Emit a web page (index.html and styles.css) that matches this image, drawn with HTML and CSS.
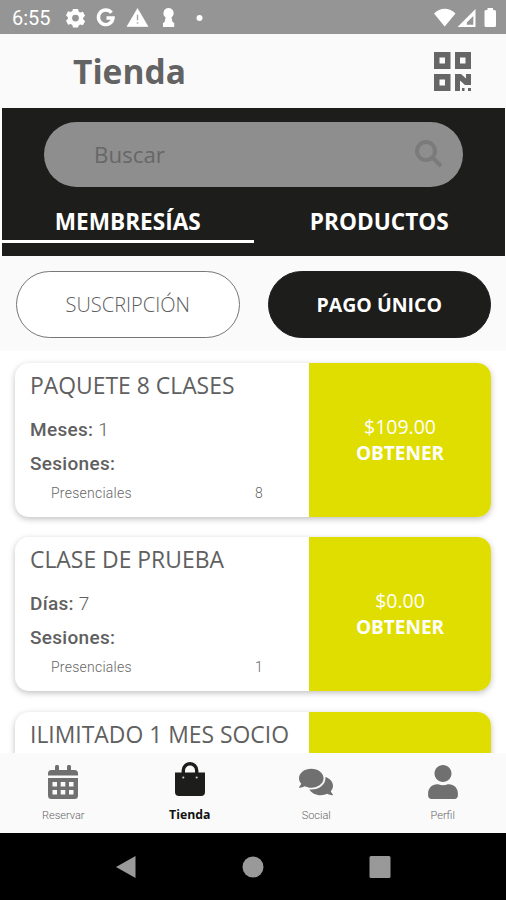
FILE: index.html
```html
<!DOCTYPE html>
<html lang="es">
<head>
  <meta charset="UTF-8" />
  <meta name="viewport" content="width=device-width, initial-scale=1.0" />
  <title>Tienda</title>
  <link rel="stylesheet" href="styles.css">
</head>
<body>
  <div class="status-bar">
    <span class="clock">6:55</span>
    <svg class="status-left" viewBox="0 0 140 20">
      <path fill-rule="evenodd" d="M7 1h5l.7 2.6 1.6.9 2.6-.8 2.2 4-2 2v1.6l2 2-2.2 4-2.6-.8-1.6.9L12 19.500H7l-.7-2.600-1.600-.9-2.600.8-2.100-4 1.900-2V9.200L0 7.200l2.100-4 2.600.8 1.600-.9zM9.500 6.700a3.400 3.400 0 1 0 0 6.800 3.400 3.400 0 0 0 0-6.800z"/>
      <path class="g-mark" d="M45.500 4.800A7.300 7.300 0 1 0 47 10h-6.500"/>
      <path fill-rule="evenodd" d="M71.500 0.500 82 18.500H61zM70.700 6.500v6h1.700v-6zm0 7.500v2h1.700v-2z" stroke="#fff" stroke-width=".6"/>
      <path d="M102.500 0a5.200 5.200 0 0 1 3 9.400l1 4.600 1.700 1v4H97v-4l1.600-1 1-4.600A5.200 5.200 0 0 1 102.500 0z"/>
      <circle cx="133.500" cy="10" r="3"/>
    </svg>
    <svg class="status-right" viewBox="0 0 63 20">
      <path d="M0 5.500C6-1 15.500-1 21.500 5.500L10.700 18.500z"/>
      <path fill-rule="evenodd" d="M41.500 1v18h-18zM39.300 8v8.800h-6.500v-2.300z"/>
      <rect x="50.500" y="2" width="11.500" height="17" rx="1.500"/>
      <rect x="53.500" y="0" width="5.500" height="4"/>
    </svg>
  </div>

  <header class="header">
    <h1 class="title">Tienda</h1>
    <svg class="qr" viewBox="0 0 37 39">
      <path fill-rule="evenodd" d="M0 0h16.500v17H0zM5.500 5.500v6h5.500v-6zM21 0h16v17H21zM26 5.500v6h5.500v-6zM0 22h16.500v17H0zM5.500 27.500v6h5.500v-6z"/>
      <path d="M21 22h6l5 4.500V22h5v11h-6l-5-4.500V39h-5zM28 36h2.500v3H28zM34 36h3v3h-3z"/>
    </svg>
  </header>

  <!-- search + tabs -->
  <section class="top-panel">
    <div class="search">
      <span>Buscar</span>
      <svg class="search-icon" viewBox="0 0 28 28">
        <circle cx="11" cy="11" r="9"/>
        <path d="M17.500 17.500 26 26"/>
      </svg>
    </div>
    <div class="tabs">
      <div class="tab active">MEMBRESÍAS</div>
      <div class="tab">PRODUCTOS</div>
    </div>
  </section>

  <div class="filters">
    <button class="pill">SUSCRIPCIÓN</button>
    <button class="pill selected">PAGO ÚNICO</button>
  </div>

  <main class="list">
    <article class="card">
      <div class="card-info">
        <h2>PAQUETE 8 CLASES</h2>
        <p class="detail"><b>Meses:</b> 1</p>
        <p class="detail"><b>Sesiones:</b></p>
        <p class="session"><span>Presenciales</span><span>8</span></p>
      </div>
      <div class="card-buy">
        <span>$109.00</span>
        <strong>OBTENER</strong>
      </div>
    </article>

    <article class="card">
      <div class="card-info">
        <h2>CLASE DE PRUEBA</h2>
        <p class="detail"><b>Días:</b> 7</p>
        <p class="detail"><b>Sesiones:</b></p>
        <p class="session"><span>Presenciales</span><span>1</span></p>
      </div>
      <div class="card-buy">
        <span>$0.00</span>
        <strong>OBTENER</strong>
      </div>
    </article>

    <article class="card">
      <div class="card-info">
        <h2>ILIMITADO 1 MES SOCIO</h2>
      </div>
      <div class="card-buy"></div>
    </article>
  </main>

  <nav class="bottom-nav">
    <div class="nav-item">
      <svg class="nav-icon" viewBox="0 0 30 34">
        <path d="M7 6V1.800a1.500 1.500 0 0 1 4 0V5h8V1.800a1.500 1.500 0 0 1 4 0V5h3.500A3.500 3.500 0 0 1 30 8.500v2H0v-2A3.500 3.500 0 0 1 3.500 5H7z"/>
        <path fill-rule="evenodd" d="M0 13h30v17.500a3.500 3.500 0 0 1-3.500 3.500h-23A3.500 3.500 0 0 1 0 30.500zM4.500 17v4.500H9V17zm8.200 0v4.500h4.600V17zm8.300 0v4.500h4.500V17zM4.500 25v4.500H9V25zm8.200 0v4.500h4.600V25zm8.300 0v4.500h4.500V25z"/>
      </svg>
      <span>Reservar</span>
    </div>
    <div class="nav-item current">
      <svg class="nav-icon" viewBox="0 0 30 34">
        <path d="M0 10.500h30V30a4 4 0 0 1-4 4H4a4 4 0 0 1-4-4z"/>
        <path class="handle" d="M8.300 14V8.500a6.700 6.700 0 0 1 13.400 0V14"/>
        <circle class="stud" cx="8.300" cy="15.500" r="1.100"/>
        <circle class="stud" cx="21.700" cy="15.500" r="1.100"/>
      </svg>
      <span>Tienda</span>
    </div>
    <div class="nav-item">
      <svg class="nav-icon chat" viewBox="0 32 576 448">
        <path d="M416 192c0-88.400-93.100-160-208-160S0 103.600 0 192c0 34.300 14.100 65.900 38 92-13.400 30.200-35.500 54.200-35.800 54.500-2.200 2.300-2.800 5.700-1.500 8.700S4.800 352 8 352c36.600 0 66.900-12.300 88.700-25 32.200 15.700 70.300 25 111.300 25 114.900 0 208-71.600 208-160zm122 220c23.900-26 38-57.700 38-92 0-66.900-53.500-124.200-129.300-148.100.9 6.600 1.300 13.300 1.300 20.100 0 105.900-107.700 192-240 192-10.800 0-21.300-.8-31.700-1.900C207.800 439.600 281.800 480 368 480c41 0 79.100-9.200 111.300-25 21.800 12.700 52.100 25 88.700 25 3.200 0 6.100-1.900 7.300-4.800 1.300-2.900.7-6.300-1.500-8.700-.3-.3-22.400-24.200-35.800-54.500z"/>
      </svg>
      <span>Social</span>
    </div>
    <div class="nav-item">
      <svg class="nav-icon" viewBox="0 0 448 512">
        <path d="M224 256c70.700 0 128-57.300 128-128S294.700 0 224 0 96 57.300 96 128s57.300 128 128 128zm89.600 32h-16.700c-22.200 10.200-46.900 16-72.900 16s-50.600-5.800-72.900-16h-16.700C60.200 288 0 348.200 0 422.400V464c0 26.500 21.500 48 48 48h352c26.500 0 48-21.500 48-48v-41.600c0-74.200-60.200-134.400-134.400-134.400z"/>
      </svg>
      <span>Perfil</span>
    </div>
  </nav>

  <div class="system-nav">
    <svg viewBox="0 0 22 24"><path d="M1 12 20.500 1v22z"/></svg>
    <svg viewBox="0 0 22 24"><circle cx="11" cy="12" r="10.500"/></svg>
    <svg viewBox="0 0 22 24"><rect x=".5" y="1" width="21" height="22" rx="1.500"/></svg>
  </div>
</body>
</html>
```
FILE: styles.css
```css
* {
  box-sizing: border-box;
}
body {
  margin: 0;
  width: 506px;
  height: 900px;
  display: flex;
  flex-direction: column;
  overflow: hidden;
  background-color: #fff;
  color: #606060;
  font-family: "Open Sans", "Noto Sans", sans-serif;
}
h1, h2, p {
  margin: 0;
}
svg {
  display: block;
  flex: none;
}

.status-bar {
  flex: none;
  height: 34px;
  display: flex;
  align-items: center;
  padding: 1px 9px 0 12px;
  background-color: #959595;
  color: #fff;
  fill: #fff;
}
.clock {
  width: 54px;
  font-family: Roboto, sans-serif;
  font-size: 20px;
}
.status-left {
  width: 140px;
  height: 20px;
}
.g-mark {
  fill: none;
  stroke: #fff;
  stroke-width: 3.4;
}
.status-right {
  width: 63px;
  height: 20px;
  margin-left: auto;
}

.header {
  flex: none;
  height: 74px;
  display: flex;
  align-items: center;
  justify-content: space-between;
  padding: 0 35px 0 73px;
  background-color: #fafafa;
}
.title {
  font-size: 33.5px;
  line-height: 46px;
  font-weight: 700;
  color: #636363;
}
.qr {
  width: 37px;
  height: 39px;
  fill: #666;
}

.top-panel {
  flex: none;
  height: 148px;
  margin: 0 1px 0 2px;
  padding-top: 14px;
  background-color: #1d1d1b;
}
.search {
  height: 65px;
  margin: 0 42px;
  padding: 0 20px 0 50px;
  display: flex;
  align-items: center;
  justify-content: space-between;
  border-radius: 33px;
  background-color: #8e8e8e;
  color: #676767;
  font-size: 22.3px;
}
.search-icon {
  width: 28px;
  height: 28px;
  margin-bottom: 2px;
  fill: none;
  stroke: #7b7b7b;
  stroke-width: 4;
}
.tabs {
  display: flex;
  margin-top: 13px;
}
.tab {
  flex: 1;
  height: 43px;
  line-height: 43px;
  text-align: center;
  color: #fff;
  font-size: 22.6px;
  font-weight: 700;
}
.tab.active {
  border-bottom: 3px solid #fff;
}

.filters {
  flex: none;
  height: 95px;
  display: flex;
  gap: 28px;
  padding: 15px 15px 13px 16px;
  background-color: #fafafa;
}
.pill {
  flex: 1;
  height: 67px;
  padding: 0;
  border: 1px solid #777;
  border-radius: 34px;
  background-color: #fff;
  color: #606060;
  font-family: inherit;
  font-size: 20px;
  font-weight: 300;
}
.pill.selected {
  border-color: #1d1d1b;
  background-color: #1d1d1b;
  color: #fff;
  font-size: 19.5px;
  font-weight: 700;
}

.list {
  flex: 1;
  min-height: 0;
  overflow: hidden;
  display: flex;
  flex-direction: column;
  gap: 20.5px;
  padding: 11.5px 15px 0;
}
.card {
  flex: none;
  height: 154px;
  display: flex;
  overflow: hidden;
  border-radius: 14px;
  background-color: #fff;
  box-shadow: 0 2px 6px rgba(0, 0, 0, 0.25);
}
.card-info {
  width: 294px;
  padding: 8px 15px 0;
}
.card h2 {
  font-size: 22.9px;
  line-height: 30px;
  font-weight: 400;
  white-space: nowrap;
  margin-bottom: 12px;
}
.detail {
  font-family: Roboto, sans-serif;
  font-size: 19px;
  line-height: 34px;
  font-weight: 300;
  letter-spacing: 0.3px;
}
.detail b {
  font-weight: 500;
}
.session {
  display: flex;
  justify-content: space-between;
  padding: 0 31px 0 21px;
  font-family: Roboto, sans-serif;
  font-size: 14px;
  line-height: 25px;
  font-weight: 300;
  letter-spacing: 0.25px;
  color: #666;
}
.card-buy {
  flex: 1;
  display: flex;
  flex-direction: column;
  align-items: center;
  justify-content: center;
  background-color: #e0dd00;
  color: #fff;
  font-size: 19.5px;
  line-height: 27px;
}
.card-buy strong {
  font-size: 19px;
}

.bottom-nav {
  flex: none;
  height: 80px;
  display: flex;
  background-color: #fafafa;
  fill: #707070;
}
.nav-item {
  flex: 1;
  display: flex;
  flex-direction: column;
  align-items: center;
  gap: 9px;
  padding-top: 12px;
  font-family: Roboto, sans-serif;
  font-size: 11px;
  line-height: 16px;
  font-weight: 300;
  color: #666;
}
.nav-icon {
  width: 30px;
  height: 34px;
}
.nav-icon.chat {
  width: 34px;
}
.nav-item.current {
  padding-top: 9px;
  gap: 11px;
  color: #111;
  fill: #1d1d1b;
  font-family: "Open Sans", "Noto Sans", sans-serif;
  font-size: 12.3px;
  font-weight: 700;
}
.handle {
  fill: none;
  stroke: #1d1d1b;
  stroke-width: 3.4;
}
.stud {
  fill: #ccc;
}

.system-nav {
  flex: none;
  height: 67px;
  display: flex;
  align-items: center;
  justify-content: center;
  gap: 105px;
  background-color: #000;
  fill: #999;
}
.system-nav svg {
  width: 22px;
  height: 24px;
}
```
